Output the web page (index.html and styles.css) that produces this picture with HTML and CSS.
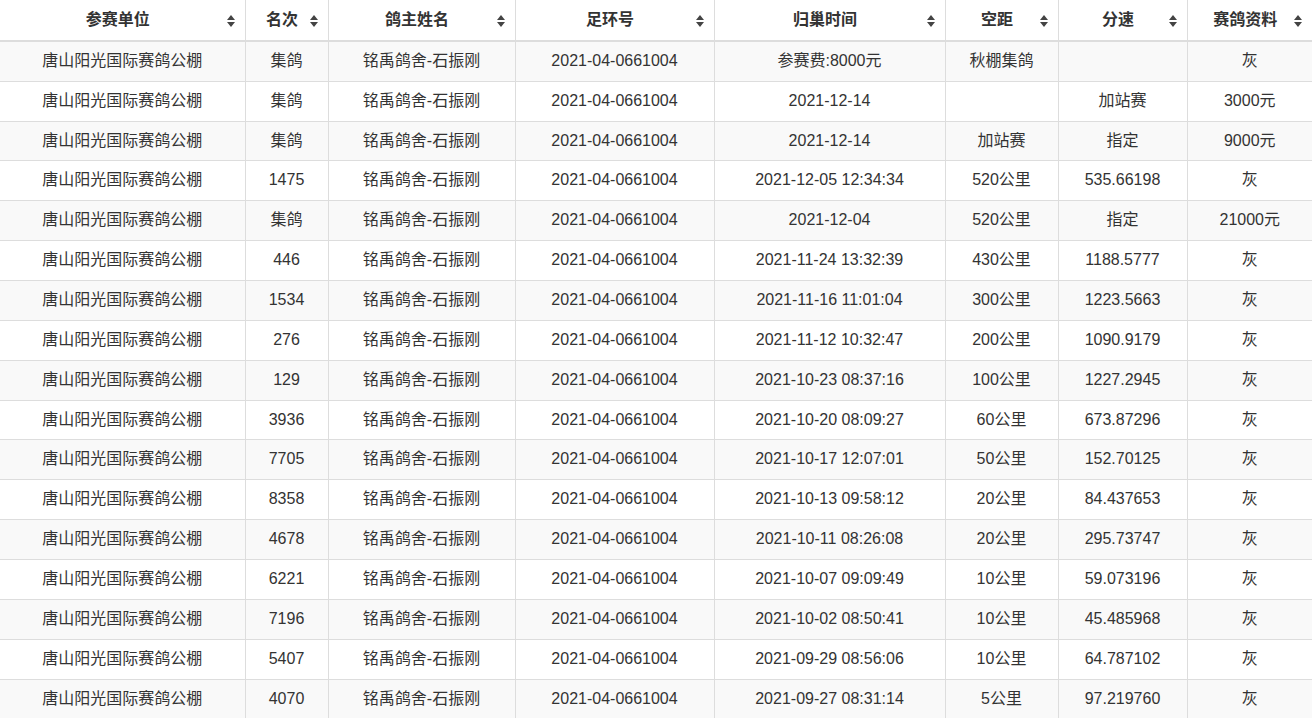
FILE: index.html
```html
<!DOCTYPE html>
<html lang="zh-CN">
<head>
<meta charset="utf-8">
<title>赛绩</title>
<link rel="stylesheet" href="styles.css">
</head>
<body>
<table class="grid">
  <colgroup>
    <col class="c1"><col class="c2"><col class="c3"><col class="c4"><col class="c5"><col class="c6"><col class="c7"><col class="c8">
  </colgroup>
  <thead>
    <tr>
      <th><span class="th-inner">参赛单位</span><svg class="sort" viewBox="0 0 8 12"><path d="M4 0 L8 5 L0 5 Z M0 7 L8 7 L4 12 Z"/></svg></th>
      <th><span class="th-inner">名次</span><svg class="sort" viewBox="0 0 8 12"><path d="M4 0 L8 5 L0 5 Z M0 7 L8 7 L4 12 Z"/></svg></th>
      <th><span class="th-inner">鸽主姓名</span><svg class="sort" viewBox="0 0 8 12"><path d="M4 0 L8 5 L0 5 Z M0 7 L8 7 L4 12 Z"/></svg></th>
      <th><span class="th-inner">足环号</span><svg class="sort" viewBox="0 0 8 12"><path d="M4 0 L8 5 L0 5 Z M0 7 L8 7 L4 12 Z"/></svg></th>
      <th><span class="th-inner">归巢时间</span><svg class="sort" viewBox="0 0 8 12"><path d="M4 0 L8 5 L0 5 Z M0 7 L8 7 L4 12 Z"/></svg></th>
      <th><span class="th-inner">空距</span><svg class="sort" viewBox="0 0 8 12"><path d="M4 0 L8 5 L0 5 Z M0 7 L8 7 L4 12 Z"/></svg></th>
      <th><span class="th-inner">分速</span><svg class="sort" viewBox="0 0 8 12"><path d="M4 0 L8 5 L0 5 Z M0 7 L8 7 L4 12 Z"/></svg></th>
      <th><span class="th-inner">赛鸽资料</span><svg class="sort" viewBox="0 0 8 12"><path d="M4 0 L8 5 L0 5 Z M0 7 L8 7 L4 12 Z"/></svg></th>
    </tr>
  </thead>
  <tbody>
    <tr><td>唐山阳光国际赛鸽公棚</td><td>集鸽</td><td>铭禹鸽舍-石振刚</td><td>2021-04-0661004</td><td>参赛费:8000元</td><td>秋棚集鸽</td><td></td><td>灰</td></tr>
    <tr><td>唐山阳光国际赛鸽公棚</td><td>集鸽</td><td>铭禹鸽舍-石振刚</td><td>2021-04-0661004</td><td>2021-12-14</td><td></td><td>加站赛</td><td>3000元</td></tr>
    <tr><td>唐山阳光国际赛鸽公棚</td><td>集鸽</td><td>铭禹鸽舍-石振刚</td><td>2021-04-0661004</td><td>2021-12-14</td><td>加站赛</td><td>指定</td><td>9000元</td></tr>
    <tr><td>唐山阳光国际赛鸽公棚</td><td>1475</td><td>铭禹鸽舍-石振刚</td><td>2021-04-0661004</td><td>2021-12-05 12:34:34</td><td>520公里</td><td>535.66198</td><td>灰</td></tr>
    <tr><td>唐山阳光国际赛鸽公棚</td><td>集鸽</td><td>铭禹鸽舍-石振刚</td><td>2021-04-0661004</td><td>2021-12-04</td><td>520公里</td><td>指定</td><td>21000元</td></tr>
    <tr><td>唐山阳光国际赛鸽公棚</td><td>446</td><td>铭禹鸽舍-石振刚</td><td>2021-04-0661004</td><td>2021-11-24 13:32:39</td><td>430公里</td><td>1188.5777</td><td>灰</td></tr>
    <tr><td>唐山阳光国际赛鸽公棚</td><td>1534</td><td>铭禹鸽舍-石振刚</td><td>2021-04-0661004</td><td>2021-11-16 11:01:04</td><td>300公里</td><td>1223.5663</td><td>灰</td></tr>
    <tr><td>唐山阳光国际赛鸽公棚</td><td>276</td><td>铭禹鸽舍-石振刚</td><td>2021-04-0661004</td><td>2021-11-12 10:32:47</td><td>200公里</td><td>1090.9179</td><td>灰</td></tr>
    <tr><td>唐山阳光国际赛鸽公棚</td><td>129</td><td>铭禹鸽舍-石振刚</td><td>2021-04-0661004</td><td>2021-10-23 08:37:16</td><td>100公里</td><td>1227.2945</td><td>灰</td></tr>
    <tr><td>唐山阳光国际赛鸽公棚</td><td>3936</td><td>铭禹鸽舍-石振刚</td><td>2021-04-0661004</td><td>2021-10-20 08:09:27</td><td>60公里</td><td>673.87296</td><td>灰</td></tr>
    <tr><td>唐山阳光国际赛鸽公棚</td><td>7705</td><td>铭禹鸽舍-石振刚</td><td>2021-04-0661004</td><td>2021-10-17 12:07:01</td><td>50公里</td><td>152.70125</td><td>灰</td></tr>
    <tr><td>唐山阳光国际赛鸽公棚</td><td>8358</td><td>铭禹鸽舍-石振刚</td><td>2021-04-0661004</td><td>2021-10-13 09:58:12</td><td>20公里</td><td>84.437653</td><td>灰</td></tr>
    <tr><td>唐山阳光国际赛鸽公棚</td><td>4678</td><td>铭禹鸽舍-石振刚</td><td>2021-04-0661004</td><td>2021-10-11 08:26:08</td><td>20公里</td><td>295.73747</td><td>灰</td></tr>
    <tr><td>唐山阳光国际赛鸽公棚</td><td>6221</td><td>铭禹鸽舍-石振刚</td><td>2021-04-0661004</td><td>2021-10-07 09:09:49</td><td>10公里</td><td>59.073196</td><td>灰</td></tr>
    <tr><td>唐山阳光国际赛鸽公棚</td><td>7196</td><td>铭禹鸽舍-石振刚</td><td>2021-04-0661004</td><td>2021-10-02 08:50:41</td><td>10公里</td><td>45.485968</td><td>灰</td></tr>
    <tr><td>唐山阳光国际赛鸽公棚</td><td>5407</td><td>铭禹鸽舍-石振刚</td><td>2021-04-0661004</td><td>2021-09-29 08:56:06</td><td>10公里</td><td>64.787102</td><td>灰</td></tr>
    <tr><td>唐山阳光国际赛鸽公棚</td><td>4070</td><td>铭禹鸽舍-石振刚</td><td>2021-04-0661004</td><td>2021-09-27 08:31:14</td><td>5公里</td><td>97.219760</td><td>灰</td></tr>
  </tbody>
</table>
</body>
</html>
```

FILE: styles.css
```css
html, body {
  margin: 0;
  padding: 0;
  background: #fff;
}

body {
  font-family: "Liberation Sans", Arial, "Noto Sans CJK SC", sans-serif;
  font-size: 16px;
  color: #333;
  overflow: hidden;
}

.grid {
  width: 1312px;
  border-collapse: collapse;
  table-layout: fixed;
}

.c1 { width: 245px; }
.c2 { width: 83px; }
.c3 { width: 187px; }
.c4 { width: 199px; }
.c5 { width: 231px; }
.c6 { width: 113px; }
.c7 { width: 129px; }
.c8 { width: 125px; }

.grid th,
.grid td {
  line-height: 22.857px;
  text-align: center;
  border-left: 1px solid #ddd;
  border-right: 1px solid #ddd;
  white-space: nowrap;
  overflow: hidden;
}

.grid th:first-child,
.grid td:first-child {
  border-left: none;
}

.grid th:last-child,
.grid td:last-child {
  border-right: none;
}

.grid th {
  position: relative;
  padding: 9px 17px 8px 8px;
  font-weight: bold;
  color: #333;
  border-bottom: 2px solid #ddd;
}

.th-inner {
  display: inline-block;
}

.sort {
  position: absolute;
  right: 10px;
  top: 15px;
  width: 8px;
  height: 12px;
  fill: #444;
}

.grid td {
  padding: 8px;
  border-top: 1px solid #ddd;
}

.grid tbody tr:first-child td {
  border-top: none;
}

.grid tbody tr:nth-child(odd) {
  background: #f9f9f9;
}
```
